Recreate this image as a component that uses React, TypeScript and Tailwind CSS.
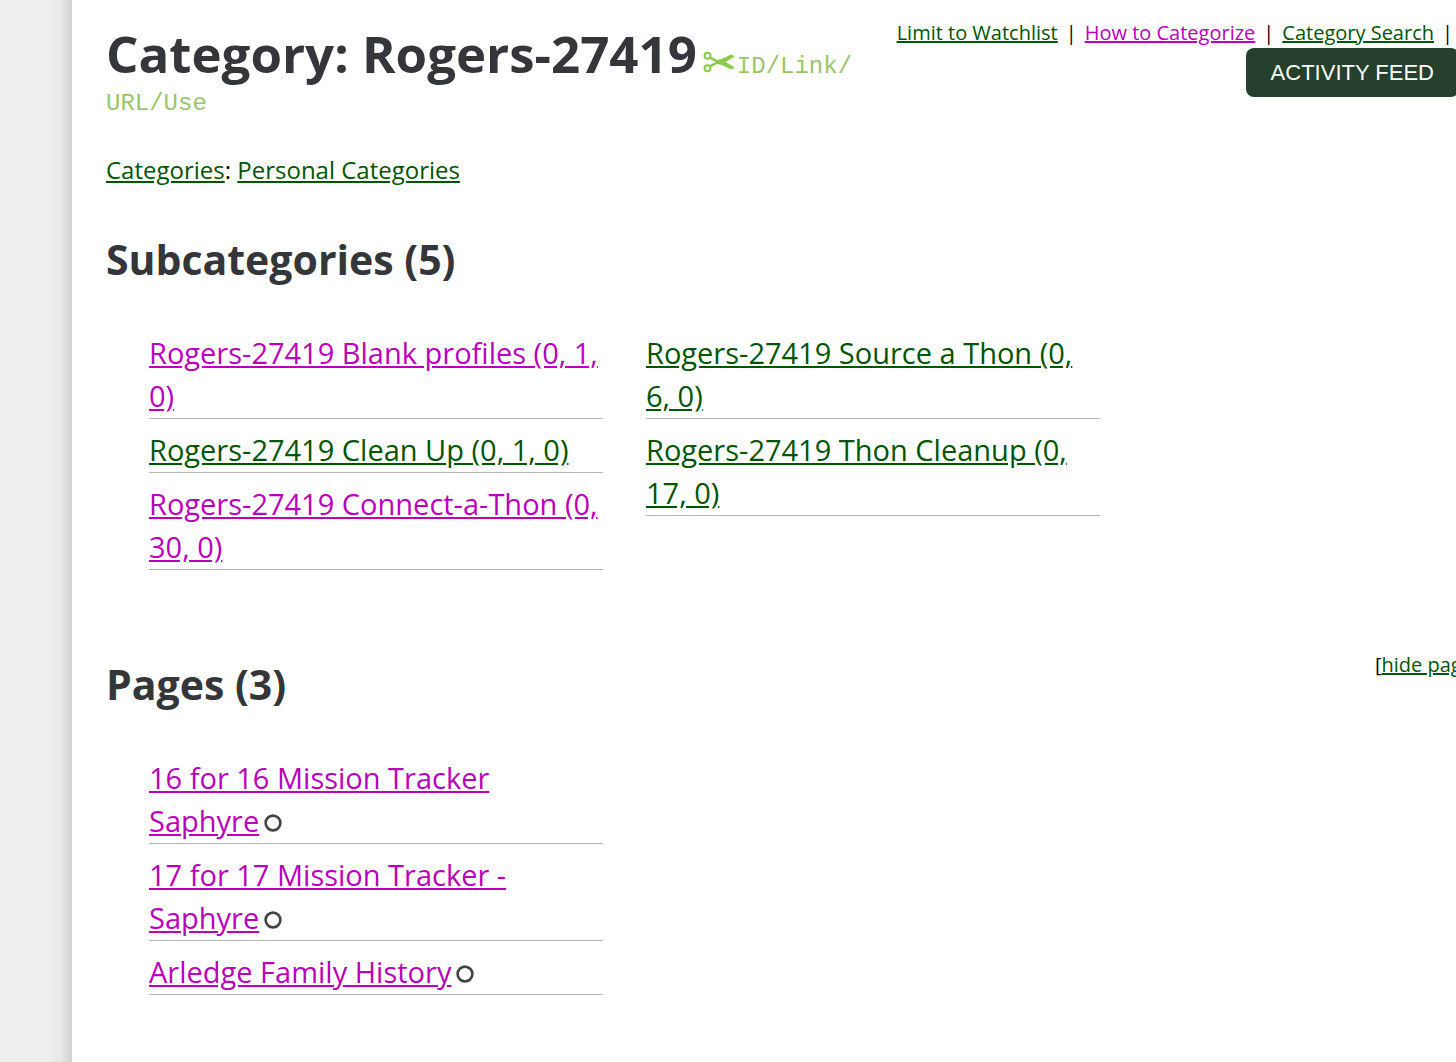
import React from 'react';

interface Entry {
  title: string;
  visited: boolean;
  open?: boolean;
}

const subcategories: Entry[][] = [
  [
    { title: 'Rogers-27419 Blank profiles (0, 1, 0)', visited: true },
    { title: 'Rogers-27419 Clean Up (0, 1, 0)', visited: false },
    { title: 'Rogers-27419 Connect-a-Thon (0, 30, 0)', visited: true },
  ],
  [
    { title: 'Rogers-27419 Source a Thon (0, 6, 0)', visited: false },
    { title: 'Rogers-27419 Thon Cleanup (0, 17, 0)', visited: false },
  ],
];

const pages: Entry[] = [
  { title: '16 for 16 Mission Tracker Saphyre', visited: true, open: true },
  { title: '17 for 17 Mission Tracker - Saphyre', visited: true, open: true },
  { title: 'Arledge Family History', visited: true, open: true },
];

const Link: React.FC<{ visited?: boolean; children: React.ReactNode }> = ({ visited, children }) => (
  <a href="#" className={visited ? 'underline text-[#bb00bb]' : 'underline text-[#005500]'}>
    {children}
  </a>
);

// Open privacy marker shown after a page title
const OpenCircle = () => (
  <svg className="ml-[5px] inline-block align-baseline" width="18" height="18" viewBox="0 0 18 18" aria-hidden="true">
    <circle cx="9" cy="9" r="7.4" fill="none" stroke="#444" strokeWidth="2.6" />
  </svg>
);

const Scissors = () => (
  <svg className="ml-1.5 inline-block align-baseline" width="34" height="22" viewBox="0 0 34 22" fill="none" stroke="#8ccb4a" aria-hidden="true">
    <circle cx="4.5" cy="4.8" r="3" strokeWidth="2" />
    <circle cx="4.5" cy="17.2" r="3" strokeWidth="2" />
    <path d="M7.2 6.8 17 11.6M7.2 15.2 17 10.4" strokeWidth="2.4" />
    <path d="M14 10.5 28.5 3.8 31 5.6 19 12.8 15 13Z" fill="#8ccb4a" strokeWidth="0.8" strokeLinejoin="round" />
    <path d="M14 11.5 28.5 18.2 31 16.4 19 9.2 15 9Z" fill="#8ccb4a" strokeWidth="0.8" strokeLinejoin="round" />
  </svg>
);

const EntryList: React.FC<{ entries: Entry[] }> = ({ entries }) => (
  <ul className="flex w-[454px] flex-col gap-[9px]">
    {entries.map((e) => (
      <li key={e.title} className="border-b border-[#b4b4b4] pb-px text-[29px] leading-[43px]">
        <Link visited={e.visited}>{e.title}</Link>
        {e.open && <OpenCircle />}
      </li>
    ))}
  </ul>
);

const App: React.FC = () => (
  <div className="flex min-h-screen overflow-hidden bg-white font-['Open_Sans',sans-serif] text-black">
    <div className="w-[72px] shrink-0 bg-linear-to-r from-[#efefed] from-68% via-[#e7e7e7] via-85% to-[#d0d0d0]" />
    <main className="-mr-[3px] min-w-0 flex-1 pl-[34px]">
      <header className="flex items-start justify-between">
        <div className="pt-[19px] leading-[34px]">
          <h1 className="inline text-[51px] leading-[68px] font-bold text-[#35363a]">Category: Rogers-27419</h1>
          <Scissors />
          <span className="font-['Liberation_Mono',monospace] text-[24px] text-[#9bc56c]">
            ID/Link/
            <br />
            URL/Use
          </span>
        </div>
        <div className="flex shrink-0 flex-col items-end pt-[18px]">
          <nav className="flex gap-2 pr-1.5 text-[20px] leading-[30px]">
            <Link>Limit to Watchlist</Link>
            <span>|</span>
            <Link visited>How to Categorize</Link>
            <span>|</span>
            <Link>Category Search</Link>
            <span>|</span>
          </nav>
          <button className="h-[49px] rounded-lg bg-[#25402d] px-[25px] font-['Liberation_Sans',sans-serif] text-[22px] text-white">
            ACTIVITY FEED
          </button>
        </div>
      </header>

      <p className="pt-[31px] text-[24px] leading-[36px]">
        <Link>Categories</Link>: <Link>Personal Categories</Link>
      </p>

      <section>
        <h2 className="pt-[41px] text-[41px] leading-[60px] font-bold text-[#35363a]">Subcategories (5)</h2>
        <div className="flex gap-[43px] pt-[42px] pl-[43px]">
          {subcategories.map((column, i) => (
            <EntryList key={i} entries={column} />
          ))}
        </div>
      </section>

      <section className="pt-20">
        <div className="flex items-start justify-between">
          <h2 className="pt-1 text-[41px] leading-[60px] font-bold text-[#35363a]">Pages (3)</h2>
          <span className="-mr-[30px] text-[20px] leading-[30px]">
            [<Link>hide pages</Link>]
          </span>
        </div>
        <div className="pt-[42px] pl-[43px]">
          <EntryList entries={pages} />
        </div>
      </section>
    </main>
  </div>
);

export default App;
